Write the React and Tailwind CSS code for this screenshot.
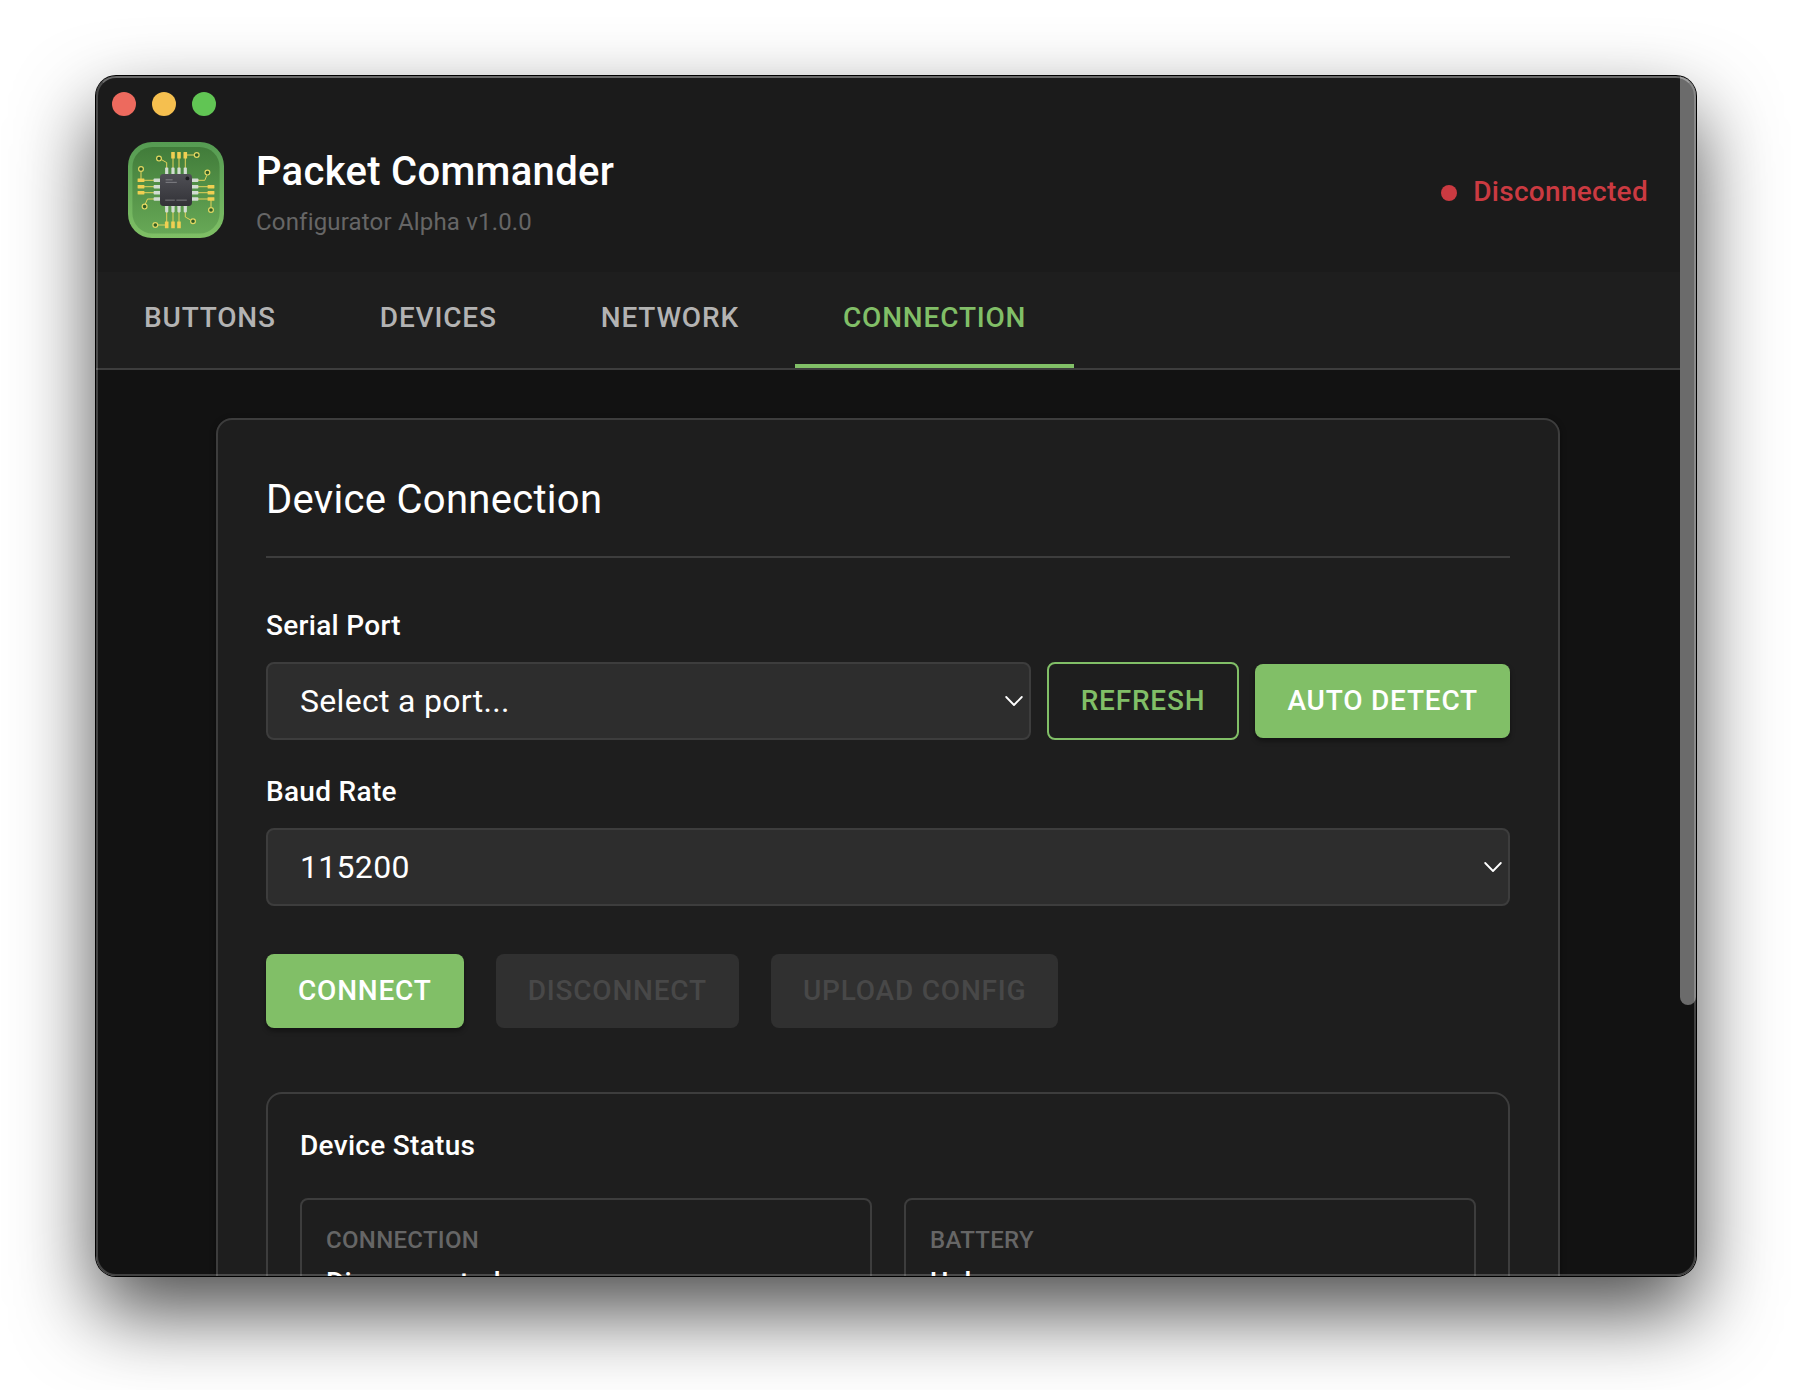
const TOP_PINS = [38.7, 45, 51, 57.3];
const SIDE_PINS = [38.3, 44.7, 50.7, 57];
const VIAS = [
  [68.7, 13],
  [31, 16.6],
  [13, 27],
  [79.4, 30.6],
  [16.6, 64.6],
  [83, 68],
  [27.3, 83],
  [65, 79.2],
];

function ChipLogo() {
  return (
    <svg className="size-24 shrink-0" viewBox="0 0 96 96" aria-hidden="true">
      <defs>
        <linearGradient id="rim" x1="0" y1="0" x2="0" y2="1">
          <stop offset="0" stopColor="#559b52" />
          <stop offset="1" stopColor="#7fc065" />
        </linearGradient>
        <linearGradient id="board" x1="0" y1="0" x2="0" y2="1">
          <stop offset="0" stopColor="#417c3a" />
          <stop offset="1" stopColor="#67a856" />
        </linearGradient>
        <linearGradient id="chip" x1="0" y1="0" x2="0" y2="1">
          <stop offset="0" stopColor="#4f4f55" />
          <stop offset="1" stopColor="#323237" />
        </linearGradient>
      </defs>
      <rect width="96" height="96" rx="24" fill="url(#rim)" />
      <rect x="4.4" y="5" width="87.2" height="86.4" rx="20" fill="url(#board)" />
      <g fill="none" stroke="#e3d25a" strokeWidth="1">
        <path d="M45 16v10M51 16v10M57.3 16v10M57.3 13H66" />
        <path d="M33.4 17.6l5.3 3V26" />
        <path d="M13 29.5v8.8M13 38.3h13M13 44.7h13M13 50.7h13M26 57h-6.5l-2.2 5" />
        <path d="M70 38.3h6.8l2-5M70 44.7h13M70 50.7h13M70 57h13M83 57v8.4" />
        <path d="M38.7 70v13M45 70v13M51 70v13M38.7 83h-8.8M57.3 70v5l5.3 3" />
      </g>
      <g fill="#2f5c27" stroke="#e3d862" strokeWidth="1.2">
        {VIAS.map(([x, y]) => (
          <circle key={`${x}-${y}`} cx={x} cy={y} r="2.4" />
        ))}
      </g>
      <g fill="#f0cf52">
        {TOP_PINS.slice(1).map((x) => (
          <rect key={x} x={x - 1.8} y="10" width="3.6" height="6.6" rx="0.3" />
        ))}
        {TOP_PINS.slice(0, 3).map((x) => (
          <rect key={x} x={x - 1.8} y="79.4" width="3.6" height="6.8" rx="0.3" />
        ))}
        {SIDE_PINS.slice(0, 3).map((y) => (
          <rect key={y} x="9.6" y={y - 1.7} width="6.8" height="3.4" rx="0.3" />
        ))}
        {SIDE_PINS.slice(1).map((y) => (
          <rect key={y} x="79.6" y={y - 1.7} width="6.8" height="3.4" rx="0.3" />
        ))}
      </g>
      <g fill="#d2dcd2">
        {TOP_PINS.map((x) => (
          <g key={x}>
            <rect x={x - 1.6} y="25.6" width="3.2" height="7" rx="0.8" />
            <rect x={x - 1.6} y="63.4" width="3.2" height="7" rx="0.8" />
          </g>
        ))}
        {SIDE_PINS.map((y) => (
          <g key={y}>
            <rect x="25.6" y={y - 1.8} width="7" height="3.6" rx="0.8" />
            <rect x="63.4" y={y - 1.8} width="7" height="3.6" rx="0.8" />
          </g>
        ))}
      </g>
      <rect x="32" y="32" width="32" height="32" rx="3.4" fill="url(#chip)" />
      <circle cx="59.4" cy="36.4" r="1.9" fill="#1d1d20" />
      <g fill="#8b8b90">
        <rect x="37.6" y="37.2" width="7" height="1.2" opacity="0.7" />
        <rect x="37.6" y="39.8" width="11.2" height="1.2" opacity="0.7" />
        <rect x="37.2" y="57.6" width="9.6" height="1.1" opacity="0.7" />
        <rect x="48.4" y="57.6" width="10.4" height="1.1" opacity="0.7" />
      </g>
    </svg>
  );
}

function Tab({ label, active }) {
  return (
    <button
      className={
        active
          ? "h-24 border-b-4 border-[#81bf67] px-12 text-[28px] font-medium tracking-[0.82px] text-[#81bf67]"
          : "h-24 border-b-4 border-transparent px-12 text-[28px] font-medium tracking-[0.82px] text-[#b3b3b3]"
      }
    >
      {label}
    </button>
  );
}

function SelectBox({ value }) {
  return (
    <div className="flex h-[78px] grow items-center justify-between rounded-lg border-2 border-[#3d3d3d] bg-[#2d2d2d] pr-[6px] pl-8 text-[32px] tracking-[0.3px] text-white">
      <span>{value}</span>
      <svg className="h-[10px] w-[18px]" viewBox="0 0 18 10" fill="none" stroke="#fff" strokeWidth="1.8" strokeLinecap="round" strokeLinejoin="round">
        <path d="M1.2 1l7.8 8 7.8-8" />
      </svg>
    </div>
  );
}

function SolidButton({ children }) {
  return (
    <button className="h-[74px] shrink-0 rounded-lg bg-[#81bf67] px-8 text-[28px] font-medium tracking-[0.8px] whitespace-nowrap text-white shadow-[0_3px_5px_rgba(0,0,0,0.4)]">
      {children}
    </button>
  );
}

function DisabledButton({ children }) {
  return (
    <button disabled className="h-[74px] rounded-lg bg-[#303030] px-8 text-[28px] font-medium tracking-[0.8px] text-[#484848]">
      {children}
    </button>
  );
}

function FieldLabel({ children }) {
  return <div className="mb-5 text-[28px] leading-8 font-medium tracking-[0.3px]">{children}</div>;
}

function StatusItem({ label, value }) {
  return (
    <div className="h-[150px] rounded-lg border-2 border-[#3d3d3d] px-6 pt-[26px]">
      <div className="text-[24px] leading-7 font-medium tracking-[0.3px] text-[#666]">{label}</div>
      <div className="mt-[13px] text-[28px] leading-8 font-medium tracking-[0.3px]">{value}</div>
    </div>
  );
}

export default function App() {
  return (
    <div className="h-[1390px] w-[1800px] overflow-hidden bg-white px-24 pt-[76px] pb-[114px] font-['Roboto',sans-serif] text-white">
      <div className="h-[1200px] w-[1600px] rounded-[20px] shadow-[0_0_0_1px_#000,0_36px_80px_rgba(0,0,0,0.7)]">
        <div className="relative flex h-full w-full overflow-hidden rounded-[20px] bg-[#121212]">
          <div className="h-full w-[1584px]">
            <header className="flex h-[196px] flex-col bg-[#1b1b1b]">
              <div className="flex gap-4 pt-4 pl-4">
                <span className="size-6 rounded-full bg-[#ed6a5e]" />
                <span className="size-6 rounded-full bg-[#f5bf4f]" />
                <span className="size-6 rounded-full bg-[#61c554]" />
              </div>
              <div className="flex items-start px-8 pt-[26px]">
                <ChipLogo />
                <div className="ml-8 pt-[6px]">
                  <h1 className="text-[40px] leading-[48px] font-medium tracking-[0.3px]">Packet Commander</h1>
                  <p className="mt-[10px] text-[24px] leading-8 tracking-[0.18px] text-[#666]">Configurator Alpha v1.0.0</p>
                </div>
                <div className="mt-[34px] ml-auto flex items-center gap-4 text-[28px] leading-8 font-medium tracking-[0.3px] text-[#cb3a41]">
                  <span className="mt-[2px] size-4 rounded-full bg-[#cb3a41]" />
                  Disconnected
                </div>
              </div>
            </header>

            <nav className="flex gap-2 border-b-2 border-[#3d3d3d] bg-[#1e1e1e]">
              <Tab label="BUTTONS" />
              <Tab label="DEVICES" />
              <Tab label="NETWORK" />
              <Tab label="CONNECTION" active />
            </nav>

            <main className="px-[120px] pt-12">
              <section className="h-[1100px] rounded-2xl border-2 border-[#3d3d3d] bg-[#1e1e1e] px-12 pt-14 shadow-[0_2px_6px_rgba(0,0,0,0.4)]">
                <h2 className="border-b-2 border-[#3d3d3d] pb-8 text-[40px] leading-[48px] tracking-[0.3px]">Device Connection</h2>

                <div className="mt-[52px]">
                  <FieldLabel>Serial Port</FieldLabel>
                  <div className="flex items-center gap-4">
                    <SelectBox value="Select a port..." />
                    <button className="h-[78px] shrink-0 rounded-lg border-2 border-[#81bf67] px-8 text-[28px] font-medium tracking-[0.8px] text-[#81bf67]">
                      REFRESH
                    </button>
                    <SolidButton>AUTO DETECT</SolidButton>
                  </div>
                </div>

                <div className="mt-9">
                  <FieldLabel>Baud Rate</FieldLabel>
                  <div className="flex">
                    <SelectBox value="115200" />
                  </div>
                </div>

                <div className="mt-12 flex gap-8">
                  <SolidButton>CONNECT</SolidButton>
                  <DisabledButton>DISCONNECT</DisabledButton>
                  <DisabledButton>UPLOAD CONFIG</DisabledButton>
                </div>

                <div className="mt-16 h-[400px] rounded-2xl border-2 border-[#3d3d3d] px-8 pt-9">
                  <h3 className="text-[28px] leading-8 font-medium tracking-[0.3px]">Device Status</h3>
                  <div className="mt-9 grid grid-cols-2 gap-8">
                    <StatusItem label="CONNECTION" value="Disconnected" />
                    <StatusItem label="BATTERY" value="Unknown" />
                  </div>
                </div>
              </section>
            </main>
          </div>

          <div className="h-[929px] w-4 rounded-b-full bg-[#6b6b6b]" />

          <div className="pointer-events-none absolute inset-0 rounded-[20px] border-2 border-white/20 border-t-white/35" />
        </div>
      </div>
    </div>
  );
}
